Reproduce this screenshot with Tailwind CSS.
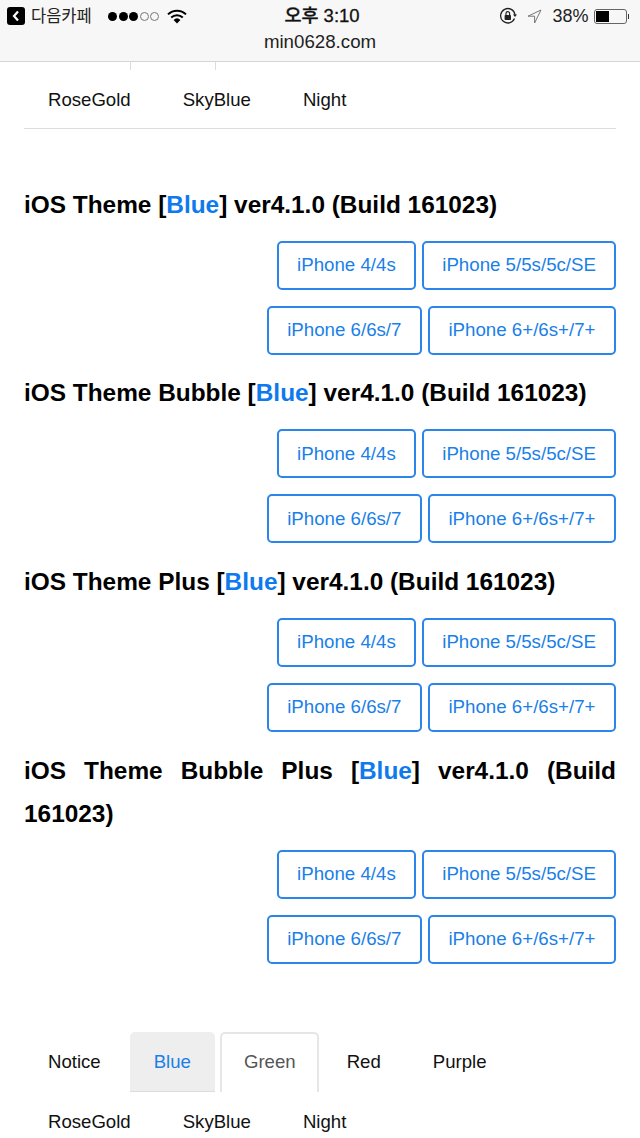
<!DOCTYPE html>
<html lang="ko">
<head>
    <meta charset="UTF-8">
    <meta name="viewport" content="width=device-width, initial-scale=1.0">
    <title>min0628.com</title>
    <script src="https://cdn.jsdelivr.net/npm/@tailwindcss/browser@4"></script>
</head>
<body class="bg-white h-[1138px] overflow-hidden font-['Liberation_Sans','Noto_Sans_CJK_KR',sans-serif] text-black">
    <!-- status bar -->
    <header class="bg-[#f7f7f7] border-b border-[#d4d4d4] h-[62px] pt-[5px]">
        <div class="grid grid-cols-[1fr_auto_1fr] items-center h-[22px]">
            <div class="flex items-center pl-[7px]">
                <span class="w-[18px] h-[18px] bg-black rounded-[3px] flex items-center justify-center">
                    <svg width="8" height="12" viewBox="0 0 8 12"><path d="M6 1.5 2 6l4 4.5" fill="none" stroke="#fff" stroke-width="2.2"/></svg>
                </span>
                <span class="ml-[6px] text-[16.5px] leading-[22px] text-[#222] w-[63px] whitespace-nowrap">다음카페</span>
                <span class="ml-[14px] flex gap-[1.5px]">
                    <i class="w-[9px] h-[9px] rounded-full bg-black"></i>
                    <i class="w-[9px] h-[9px] rounded-full bg-black"></i>
                    <i class="w-[9px] h-[9px] rounded-full bg-black"></i>
                    <i class="w-[9px] h-[9px] rounded-full border border-[#777]"></i>
                    <i class="w-[9px] h-[9px] rounded-full border border-[#777]"></i>
                </span>
                <svg class="ml-[8px]" width="20" height="15" viewBox="0 0 20 15">
                    <path d="M1 5.4a13 13 0 0 1 18 0" fill="none" stroke="#000" stroke-width="2"/>
                    <path d="M4.2 8.6a8.6 8.6 0 0 1 11.6 0" fill="none" stroke="#000" stroke-width="2"/>
                    <path d="M10 14.5 6.6 10.9a5 5 0 0 1 6.8 0z" fill="#000"/>
                </svg>
            </div>
            <div class="pl-[4px] text-[18.5px] leading-[22px] font-medium text-[#111] text-center [-webkit-text-stroke:0.3px_#111]">오후 3:10</div>
            <div class="flex items-center justify-end pr-[11px]">
                <svg width="18" height="18" viewBox="0 0 18 18">
                    <path d="M15.5 11.5A7.2 7.2 0 1 1 16 8" fill="none" stroke="#222" stroke-width="1.3"/>
                    <path d="M14 7.5h4l-2 2.6z" fill="#222"/>
                    <rect x="5.6" y="8" width="6.4" height="5" rx="0.8" fill="#222"/>
                    <path d="M7 8V6.4a1.8 1.8 0 0 1 3.6 0V8" fill="none" stroke="#222" stroke-width="1.2"/>
                </svg>
                <svg class="ml-[10px]" width="15" height="15" viewBox="0 0 15 15">
                    <path d="M14 1 1 7.2h6.6V14z" fill="none" stroke="#777" stroke-width="1"/>
                </svg>
                <span class="ml-[10px] text-[18px] leading-[22px] text-[#222]">38%</span>
                <span class="ml-[5px] w-[33px] h-[15px] border border-[#666] rounded-[3px] p-[1px] flex">
                    <span class="w-[13px] bg-black"></span>
                </span>
                <span class="w-[1.5px] h-[5px] bg-[#333] ml-[1px]"></span>
            </div>
        </div>
        <div class="text-[18.7px] leading-[20px] text-center text-[#222] mt-[5px]">min0628.com</div>
    </header>

    <main class="px-[24px]">
        <!-- tabs, top clipped by the bar -->
        <nav class="border-b border-[#ddd] h-[67px]">
            <div class="flex h-[8px]">
                <i class="w-px bg-[#ddd] ml-[106px]"></i>
                <i class="w-px bg-[#ddd] ml-[84px]"></i>
            </div>
            <ul class="flex text-[18.6px] leading-[60px] text-[#111]">
                <li class="px-[24px] mr-[4px]">RoseGold</li>
                <li class="px-[24px] mr-[4px]">SkyBlue</li>
                <li class="px-[24px] mr-[4px]">Night</li>
            </ul>
        </nav>

        <h2 class="text-[24.4px] leading-[43px] font-bold text-justify mt-[53.6px]">iOS Theme [<span class="text-[#0f7aee]">Blue</span>] ver4.1.0 (Build 161023)</h2>
        <div class="mt-[15px] flex flex-col items-end gap-[16px] text-[18.7px] text-[#1a7fe8] mb-[16.7px]">
            <div class="flex gap-[6px]">
                <a class="h-[49px] px-[18.5px] flex items-center border-2 border-[#2c85ea] rounded-[5px]">iPhone 4/4s</a>
                <a class="h-[49px] px-[18px] flex items-center border-2 border-[#2c85ea] rounded-[5px]">iPhone 5/5s/5c/SE</a>
            </div>
            <div class="flex gap-[6px]">
                <a class="h-[49px] px-[18.5px] flex items-center border-2 border-[#2c85ea] rounded-[5px]">iPhone 6/6s/7</a>
                <a class="h-[49px] px-[18.5px] flex items-center border-2 border-[#2c85ea] rounded-[5px]">iPhone 6+/6s+/7+</a>
            </div>
        </div>

        <h2 class="text-[24.4px] leading-[43px] font-bold text-justify">iOS Theme Bubble [<span class="text-[#0f7aee]">Blue</span>] ver4.1.0 (Build 161023)</h2>
        <div class="mt-[15px] flex flex-col items-end gap-[16px] text-[18.7px] text-[#1a7fe8] mb-[16.7px]">
            <div class="flex gap-[6px]">
                <a class="h-[49px] px-[18.5px] flex items-center border-2 border-[#2c85ea] rounded-[5px]">iPhone 4/4s</a>
                <a class="h-[49px] px-[18px] flex items-center border-2 border-[#2c85ea] rounded-[5px]">iPhone 5/5s/5c/SE</a>
            </div>
            <div class="flex gap-[6px]">
                <a class="h-[49px] px-[18.5px] flex items-center border-2 border-[#2c85ea] rounded-[5px]">iPhone 6/6s/7</a>
                <a class="h-[49px] px-[18.5px] flex items-center border-2 border-[#2c85ea] rounded-[5px]">iPhone 6+/6s+/7+</a>
            </div>
        </div>

        <h2 class="text-[24.4px] leading-[43px] font-bold text-justify">iOS Theme Plus [<span class="text-[#0f7aee]">Blue</span>] ver4.1.0 (Build 161023)</h2>
        <div class="mt-[15px] flex flex-col items-end gap-[16px] text-[18.7px] text-[#1a7fe8] mb-[16.7px]">
            <div class="flex gap-[6px]">
                <a class="h-[49px] px-[18.5px] flex items-center border-2 border-[#2c85ea] rounded-[5px]">iPhone 4/4s</a>
                <a class="h-[49px] px-[18px] flex items-center border-2 border-[#2c85ea] rounded-[5px]">iPhone 5/5s/5c/SE</a>
            </div>
            <div class="flex gap-[6px]">
                <a class="h-[49px] px-[18.5px] flex items-center border-2 border-[#2c85ea] rounded-[5px]">iPhone 6/6s/7</a>
                <a class="h-[49px] px-[18.5px] flex items-center border-2 border-[#2c85ea] rounded-[5px]">iPhone 6+/6s+/7+</a>
            </div>
        </div>

        <h2 class="text-[24.4px] leading-[43px] font-bold text-justify">iOS Theme Bubble Plus [<span class="text-[#0f7aee]">Blue</span>] ver4.1.0 (Build 161023)</h2>
        <div class="mt-[15px] flex flex-col items-end gap-[16px] text-[18.7px] text-[#1a7fe8]">
            <div class="flex gap-[6px]">
                <a class="h-[49px] px-[18.5px] flex items-center border-2 border-[#2c85ea] rounded-[5px]">iPhone 4/4s</a>
                <a class="h-[49px] px-[18px] flex items-center border-2 border-[#2c85ea] rounded-[5px]">iPhone 5/5s/5c/SE</a>
            </div>
            <div class="flex gap-[6px]">
                <a class="h-[49px] px-[18.5px] flex items-center border-2 border-[#2c85ea] rounded-[5px]">iPhone 6/6s/7</a>
                <a class="h-[49px] px-[18.5px] flex items-center border-2 border-[#2c85ea] rounded-[5px]">iPhone 6+/6s+/7+</a>
            </div>
        </div>

        <!-- bottom tabs -->
        <ul class="flex flex-wrap mt-[68.4px] text-[18.6px] leading-[60px] text-[#111]">
            <li class="h-[60px] px-[24px] mr-[5px]">Notice</li>
            <li class="h-[60px] px-[24px] mr-[5px] bg-[#eee] text-[#1a7fe8] rounded-t-[5px] border-b border-[#ddd]">Blue</li>
            <li class="h-[60px] pl-[22px] pr-[21px] mr-[4px] leading-[56px] text-[#555] rounded-t-[5px] border-2 border-b-0 border-[#e6e6e6]">Green</li>
            <li class="h-[60px] px-[24px] mr-[4px]">Red</li>
            <li class="h-[60px] px-[24px] mr-[4px]">Purple</li>
            <li class="h-[60px] px-[24px] mr-[4px]">RoseGold</li>
            <li class="h-[60px] px-[24px] mr-[4px]">SkyBlue</li>
            <li class="h-[60px] px-[24px] mr-[4px]">Night</li>
        </ul>
    </main>
</body>
</html>
